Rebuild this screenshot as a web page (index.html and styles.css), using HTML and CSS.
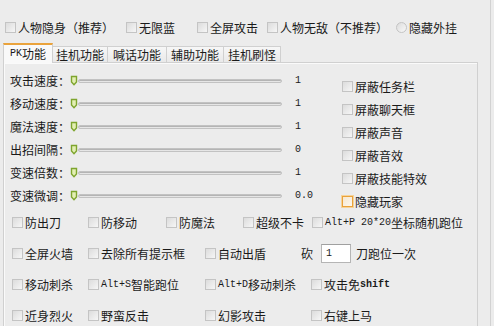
FILE: index.html
```html
<!DOCTYPE html>
<html lang="zh">
<head>
<meta charset="utf-8">
<link rel="stylesheet" href="styles.css">
</head>
<body>
<div class="frame">
  <div class="toprow">
    <label class="chk"><span class="box"></span>人物隐身（推荐）</label>
    <label class="chk"><span class="box"></span>无限蓝</label>
    <label class="chk"><span class="box"></span>全屏攻击</label>
    <label class="chk"><span class="box"></span>人物无敌（不推荐）</label>
    <label class="chk"><span class="radio"></span>隐藏外挂</label>
  </div>
  <div class="tabs">
    <div class="tab active"><span class="m">PK</span>功能</div>
    <div class="tab">挂机功能</div>
    <div class="tab">喊话功能</div>
    <div class="tab">辅助功能</div>
    <div class="tab">挂机刷怪</div>
  </div>
  <div class="panel">
    <div class="upper">
      <div class="sliders">
        <div class="srow"><span class="slabel">攻击速度：</span><svg class="thumb" viewBox="0 0 8 11"><path d="M1.5 1.5H6.5V7L4 9.8L1.5 7Z"/></svg><span class="track"></span><span class="sval m">1</span></div>
        <div class="srow"><span class="slabel">移动速度：</span><svg class="thumb" viewBox="0 0 8 11"><path d="M1.5 1.5H6.5V7L4 9.8L1.5 7Z"/></svg><span class="track"></span><span class="sval m">1</span></div>
        <div class="srow"><span class="slabel">魔法速度：</span><svg class="thumb" viewBox="0 0 8 11"><path d="M1.5 1.5H6.5V7L4 9.8L1.5 7Z"/></svg><span class="track"></span><span class="sval m">1</span></div>
        <div class="srow"><span class="slabel">出招间隔：</span><svg class="thumb" viewBox="0 0 8 11"><path d="M1.5 1.5H6.5V7L4 9.8L1.5 7Z"/></svg><span class="track"></span><span class="sval m">0</span></div>
        <div class="srow"><span class="slabel">变速倍数：</span><svg class="thumb" viewBox="0 0 8 11"><path d="M1.5 1.5H6.5V7L4 9.8L1.5 7Z"/></svg><span class="track"></span><span class="sval m">1</span></div>
        <div class="srow"><span class="slabel">变速微调：</span><svg class="thumb" viewBox="0 0 8 11"><path d="M1.5 1.5H6.5V7L4 9.8L1.5 7Z"/></svg><span class="track"></span><span class="sval m">0.0</span></div>
      </div>
      <div class="rchecks">
        <label class="chk rrow"><span class="box"></span>屏蔽任务栏</label>
        <label class="chk rrow"><span class="box"></span>屏蔽聊天框</label>
        <label class="chk rrow"><span class="box"></span>屏蔽声音</label>
        <label class="chk rrow"><span class="box"></span>屏蔽音效</label>
        <label class="chk rrow"><span class="box"></span>屏蔽技能特效</label>
        <label class="chk rrow"><span class="box focus"></span>隐藏玩家</label>
      </div>
    </div>
    <div class="lower">
      <div class="lrow r1">
        <label class="chk"><span class="box"></span>防出刀</label>
        <label class="chk"><span class="box"></span>防移动</label>
        <label class="chk"><span class="box"></span>防魔法</label>
        <label class="chk"><span class="box"></span>超级不卡</label>
        <label class="chk"><span class="box"></span><span class="m">Alt+P 20*20</span>坐标随机跑位</label>
      </div>
      <div class="lrow r2">
        <label class="chk"><span class="box"></span>全屏火墙</label>
        <label class="chk"><span class="box"></span>去除所有提示框</label>
        <label class="chk"><span class="box"></span>自动出盾</label>
        <div class="kan"><span>砍</span><span class="input m">1</span><span>刀跑位一次</span></div>
      </div>
      <div class="lrow r3">
        <label class="chk"><span class="box"></span>移动刺杀</label>
        <label class="chk"><span class="box"></span><span class="m">Alt+S</span>智能跑位</label>
        <label class="chk"><span class="box"></span><span class="m">Alt+D</span>移动刺杀</label>
        <label class="chk"><span class="box"></span>攻击免<span class="m b">shift</span></label>
      </div>
      <div class="lrow r3">
        <label class="chk"><span class="box"></span>近身烈火</label>
        <label class="chk"><span class="box"></span>野蛮反击</label>
        <label class="chk"><span class="box"></span>幻影攻击</label>
        <label class="chk"><span class="box"></span>右键上马</label>
      </div>
    </div>
  </div>
</div>
</body>
</html>
```
FILE: styles.css
```css
* { box-sizing: border-box; }
html, body { margin: 0; padding: 0; }
body {
  background: #ececec;
  font-family: "Noto Sans CJK SC", "Liberation Sans", sans-serif;
  font-size: 12px;
  color: #1a1a1a;
  overflow: hidden;
}
.frame {
  width: 491px;
  height: 326px;
  border-right: 1px solid #d2d2d2;
  overflow: hidden;
}
.m {
  font-family: "Liberation Mono", "DejaVu Sans Mono", monospace;
  font-size: 10px;
}
.b { font-weight: bold; }
.chk {
  display: flex;
  align-items: center;
  white-space: nowrap;
  line-height: 13px;
}
.box {
  flex: none;
  width: 11px;
  height: 11px;
  margin-right: 2px;
  border: 1px solid #c4c4c4;
  background: linear-gradient(135deg, #dcdcdc, #f6f6f6);
}
.box.focus {
  border: 1px solid #e9a23b;
  box-shadow: 0 0 0 1px #f6d39a;
  background: linear-gradient(135deg, #f6e7cf, #fdf8ef);
}
.radio {
  flex: none;
  width: 11px;
  height: 11px;
  margin-right: 2px;
  border: 1px solid #c4c4c4;
  border-radius: 50%;
  background: linear-gradient(135deg, #dcdcdc, #f8f8f8);
}
.toprow {
  display: grid;
  grid-template-columns: 121px 71px 70px 129px auto;
  padding: 21px 0 0 5px;
  height: 34px;
}
.tabs {
  display: flex;
  align-items: flex-end;
  margin-top: 9px;
  padding-left: 3px;
  height: 19px;
  position: relative;
  z-index: 1;
}
.tab {
  display: flex;
  align-items: center;
  justify-content: center;
  height: 16px;
  border: 1px solid #d0d0d0;
  border-bottom: none;
  margin-left: -1px;
  background: linear-gradient(#f7f7f7, #e9e9e9);
  white-space: nowrap;
}
.tab:nth-child(1) { width: 50px; margin-left: 0; }
.tab:nth-child(2) { width: 56px; }
.tab:nth-child(3) { width: 60px; }
.tab:nth-child(4) { width: 58px; }
.tab:nth-child(5) { width: 58px; }
.tab.active {
  height: 20px;
  margin-bottom: -1px;
  border-top: 2px solid #eaa33c;
  background: #f9f9f9;
  padding-bottom: 2px;
}
.panel {
  margin-left: 3px;
  width: 475px;
  height: 270px;
  border: 1px solid #d0d0d0;
  border-bottom: none;
  box-shadow: inset 1px 1px 0 #fafafa;
}
.upper {
  display: flex;
  align-items: flex-start;
  height: 144px;
  padding-top: 6px;
}
.sliders {
  width: 338px;
  padding-left: 6px;
}
.srow {
  display: flex;
  align-items: center;
  height: 23px;
}
.slabel { width: 60px; }
.thumb {
  width: 8px;
  height: 11px;
  flex: none;
}
.thumb path {
  fill: #e3efb4;
  stroke: #7ea52e;
  stroke-width: 1.4;
}
.track {
  width: 204px;
  height: 4px;
  border: 1px solid #c2c2c2;
  border-radius: 2px;
  background: #e6e6e6;
  box-shadow: inset 0 1px 0 #b4b4b4;
}
.sval { margin-left: 13px; }
.rchecks { margin-top: 6px; }
.rrow { height: 23px; }
.lower { padding-left: 8px; }
.lrow {
  display: grid;
  height: 31px;
  align-items: center;
}
.r1 { grid-template-columns: 76px 78px 77px 69px auto; }
.r2 { grid-template-columns: 76px 117px 96px auto; }
.r3 { grid-template-columns: 76px 117px 106px auto; }
.kan {
  display: flex;
  align-items: center;
  white-space: nowrap;
}
.input {
  width: 30px;
  height: 19px;
  margin: 0 5px 0 8px;
  padding: 3px 0 0 4px;
  background: #fff;
  border: 1px solid #b5b5b5;
  border-top-color: #a0a0a0;
}
```
